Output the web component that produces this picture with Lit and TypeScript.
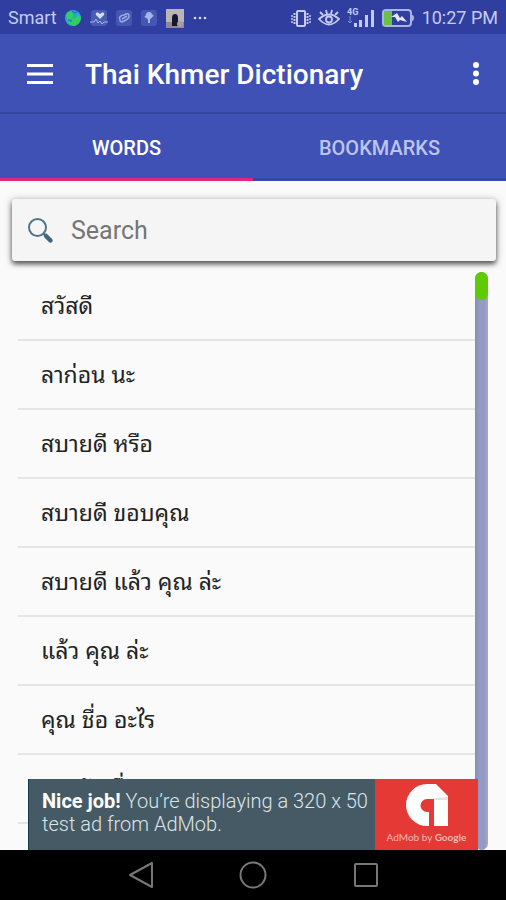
import { LitElement, html, css } from "lit";
import { customElement, property, state } from "lit/decorators.js";
import { classMap } from "lit/directives/class-map.js";

@customElement("status-bar")
class StatusBar extends LitElement {
  static styles = css`
    :host {
      display: flex;
      justify-content: space-between;
      align-items: center;
      height: 34px;
      padding: 2px 8px 0;
      box-sizing: border-box;
      background: #303f9f;
      color: #c5cbee;
      font-size: 18px;
      line-height: 24px;
    }
    .group {
      display: flex;
      align-items: center;
      white-space: nowrap;
    }
    .left {
      gap: 8px;
    }
    .right {
      gap: 7px;
    }
    svg {
      display: block;
    }
  `;
  render() {
    return html`
      <div class="group left">
        <span>Smart</span>
        <svg width="17" height="17" viewBox="0 0 17 17">
          <circle cx="8" cy="8" r="8" fill="#2aa3d8" />
          <path d="M1 5Q3 1 7 1L9 4 7 8 9 9 13 5 16 7Q16 14 9 16L4 14 2 10Z" fill="#2fcf62" />
          <path d="M7 1L9 3 12 2M3 10L7 11" stroke="#1c7fcf" stroke-width="1.5" fill="none" />
        </svg>
        <svg width="18" height="16" viewBox="0 0 18 16">
          <rect x="1" width="16" height="16" rx="3" fill="#4a5bb5" />
          <path d="M10 9L6 5Q5 2 8 2.500L10 4 12 2.500Q15 2 14 5Z" fill="#d6dcf8" />
          <path d="M0 12H4L6 9 8 13 10 11 12 14 14 12H18" stroke="#aab4e4" fill="none" />
        </svg>
        <svg width="17" height="16" viewBox="0 0 17 16">
          <rect width="16" height="16" rx="3" fill="#4557b4" />
          <path d="M4 10Q2 6 8 5 13 2 13 6 13 9 8 11 4 13 4 10ZM6 9L11 6" stroke="#9eabe2" stroke-width="1.500" fill="none" />
        </svg>
        <svg width="17" height="16" viewBox="0 0 17 16">
          <rect width="16" height="16" rx="3" fill="#4557b4" />
          <circle cx="8" cy="5" r="3" fill="#a9b5e8" />
          <path d="M8 6V13M4 6L8 9 12 5" stroke="#a9b5e8" stroke-width="2" fill="none" />
        </svg>
        <svg width="18" height="19" viewBox="0 0 18 19">
          <rect width="18" height="19" fill="#b9b5bb" />
          <rect y="13" width="18" height="6" fill="#8d8995" />
          <path d="M6 17V9Q6 5 9 5 12 5 12 9V17Z" fill="#17172b" />
          <circle cx="14" cy="15" r="3" fill="#a7a1a4" />
        </svg>
        <svg width="16" height="16" viewBox="0 0 16 16" fill="#d6dcf8">
          <circle cx="3" cy="8" r="1.300" />
          <circle cx="8" cy="8" r="1.300" />
          <circle cx="13" cy="8" r="1.300" />
        </svg>
      </div>
      <div class="group right">
        <svg width="20" height="19" viewBox="0 0 20 19" fill="none" stroke="#c5cbee">
          <rect x="6" y="2" width="8" height="15" rx="1" stroke-width="2" />
          <path d="M3.500 4V16M16.500 4V16" stroke-width="2" stroke-dasharray="2 1" />
          <path d="M1 6V14M19 6V14" stroke-width="1.500" stroke-dasharray="2 1" />
        </svg>
        <svg width="22" height="20" viewBox="0 0 22 20" fill="none" stroke="#c5cbee" stroke-width="1.800">
          <path d="M1 11Q11 2 21 11 11 22 1 11Z" />
          <circle cx="11" cy="11.500" r="3" />
          <path d="M2 4L5 7M8 2L9 6M14 2L13 6M20 4L17 7" />
        </svg>
        <svg width="28" height="22" viewBox="0 0 28 22">
          <text x="0" y="8" font-size="9" font-weight="700" fill="#c5cbee">4G</text>
          <path d="M3 9V16M1 14L3 16 5 14" stroke="#7d89cf" fill="none" />
          <path d="M7 16H10V20H7ZM12 13H15V20H12ZM18 8H21V20H18ZM24 3H27V20H24Z" fill="#c5cbee" />
        </svg>
        <svg width="33" height="18" viewBox="0 0 33 18">
          <rect x="1" y="1" width="28" height="16" rx="3" fill="none" stroke="#a9b3e4" stroke-width="2" />
          <rect x="2" y="2" width="8" height="14" fill="#6cc04a" />
          <path d="M30 6Q32 6 32 9 32 12 30 12" fill="#a9b3e4" />
          <path d="M9 8L15 4 18 9 20 7 25 13 18 11 16 13 13 8Z" fill="#e2e6fb" />
        </svg>
        <span>10:27 PM</span>
      </div>
    `;
  }
}

@customElement("ad-banner")
class AdBanner extends LitElement {
  static styles = css`
    :host {
      display: block;
    }
    .ad {
      display: flex;
      height: 71px;
      color: #dde5e8;
      background: #455a64;
      text-decoration: none;
      font-size: 20px;
      line-height: 23px;
    }
    .copy {
      flex: 1;
      margin: 0;
      padding: 11px 0 0 13px;
      border-left: 1px solid #0f3c4a;
      font-weight: 300;
    }
    strong {
      color: #fff;
      font-weight: 700;
    }
    .brand {
      display: flex;
      flex-direction: column;
      align-items: center;
      width: 103px;
      padding-top: 4px;
      box-sizing: border-box;
      background: #e53935;
      color: #f6b5b3;
      font: 10px/17px Lato, sans-serif;
      white-space: nowrap;
    }
    b {
      font-weight: 700;
    }
  `;
  render() {
    return html`
      <a class="ad" href="#admob">
        <p class="copy"><strong>Nice job!</strong> You’re displaying a 320 x 50 test ad from AdMob.</p>
        <span class="brand">
          <svg width="44" height="46" viewBox="0 0 44 46">
            <path d="M22 43A21 21 0 0 1 22 1H31L43 13V43H29V16H22A6.500 6.500 0 0 0 22 29Z" fill="#fff" />
            <path d="M24 43V29H22V43Z" fill="#fff" />
            <path d="M29 15L43 14V17L29 17Z" fill="#e4e4e4" />
          </svg>
          <span>AdMob by <b>Google</b></span>
        </span>
      </a>
    `;
  }
}

@customElement("word-list")
class WordList extends LitElement {
  @property({ attribute: false }) words: string[] = [];
  static styles = css`
    :host {
      display: flex;
      min-height: 0;
      overflow: hidden;
      padding: 0 18px;
    }
    ul {
      flex: 1;
      margin: 0;
      padding: 0;
      list-style: none;
    }
    li {
      display: flex;
      align-items: center;
      height: 69px;
      box-sizing: border-box;
      padding: 0 23px 4px;
      border-bottom: 2px solid #e5e5e5;
      color: #222;
      font-family: "Noto Sans Thai Looped", "Droid Sans Thai", Loma, Garuda, Waree, "Noto Serif Thai", FreeSerif, sans-serif;
      font-size: 23px;
      line-height: 30px;
    }
    .track {
      width: 13px;
      border-radius: 7px;
      background: linear-gradient(90deg, #858db4, #949bc2 30%, #949bc2 75%, #a4a9ce);
    }
    .thumb {
      height: 28px;
      border-radius: 7px;
      background: #5fcb05;
    }
  `;
  render() {
    return html`
      <ul>
        ${this.words.map((w) => html`<li>${w}</li>`)}
      </ul>
      <div class="track"><div class="thumb"></div></div>
    `;
  }
}

@customElement("app-root")
class AppRoot extends LitElement {
  @state() private tab = "words";
  private words = [
    "สวัสดี",
    "ลาก่อน นะ",
    "สบายดี หรือ",
    "สบายดี ขอบคุณ",
    "สบายดี แล้ว คุณ ล่ะ",
    "แล้ว คุณ ล่ะ",
    "คุณ ชื่อ อะไร",
    "ผม ฉัน ชื่อ",
  ];
  static styles = css`
    :host {
      display: flex;
      flex-direction: column;
      height: 100vh;
      overflow: hidden;
      background: #fafafa;
      font-family: Roboto, "Noto Sans", sans-serif;
    }
    button {
      border: 0;
      padding: 0;
      background: none;
      color: inherit;
      font: inherit;
    }
    svg {
      display: block;
    }
    .bar {
      display: flex;
      align-items: center;
      height: 80px;
      box-sizing: border-box;
      padding: 2px 24px 0 26px;
      background: #3f51b5;
      color: #fff;
      border-bottom: 2px solid #35469b;
    }
    h1 {
      flex: 1;
      margin: 0 0 0 31px;
      padding-top: 2px;
      font-size: 28px;
      line-height: 34px;
      font-weight: 500;
    }
    .tabs {
      display: flex;
      height: 67px;
      background: #3f51b5;
    }
    .tabs button {
      flex: 1;
      padding-top: 3px;
      border-bottom: 3px solid #3046b0;
      color: #bcc4ea;
      font-size: 20px;
      line-height: 24px;
      font-weight: 500;
    }
    .tabs .on {
      color: #fff;
      border-color: #e2267d;
    }
    main {
      position: relative;
      display: flex;
      flex-direction: column;
      flex: 1;
      min-height: 0;
    }
    .search {
      display: flex;
      align-items: center;
      gap: 17px;
      height: 62px;
      flex: none;
      box-sizing: border-box;
      margin: 18px 10px 11px 12px;
      padding: 2px 16px 0;
      border-radius: 3px;
      background: #f5f5f5;
      box-shadow: 0 3px 5px rgba(0, 0, 0, 0.6), 0 1px 8px rgba(0, 0, 0, 0.25);
    }
    input {
      flex: 1;
      min-width: 0;
      border: 0;
      padding: 0;
      outline: 0;
      background: none;
      font: 25px/32px Roboto, sans-serif;
      color: #333;
    }
    input::placeholder {
      color: #757575;
      opacity: 1;
    }
    word-list {
      flex: 1;
    }
    ad-banner {
      position: absolute;
      left: 28px;
      right: 28px;
      bottom: 0;
    }
    nav {
      display: flex;
      justify-content: center;
      align-items: center;
      gap: 85px;
      height: 50px;
      background: #000;
    }
  `;
  render() {
    return html`
      <status-bar></status-bar>
      <header class="bar">
        <button aria-label="Menu">
          <svg width="28" height="22" viewBox="0 0 28 22">
            <path d="M1 2.500H27M1 11H27M1 19.500H27" stroke="#fff" stroke-width="3" />
          </svg>
        </button>
        <h1>Thai Khmer Dictionary</h1>
        <button aria-label="More options">
          <svg width="12" height="26" viewBox="0 0 12 26" fill="#fff">
            <circle cx="6" cy="4" r="3" />
            <circle cx="6" cy="12.500" r="3" />
            <circle cx="6" cy="21" r="3" />
          </svg>
        </button>
      </header>
      <div class="tabs" role="tablist">
        ${["words", "bookmarks"].map(
          (t) => html`<button
            role="tab"
            aria-selected=${this.tab === t}
            class=${classMap({ on: this.tab === t })}
            @click=${() => (this.tab = t)}
          >${t.toUpperCase()}</button>`
        )}
      </div>
      <main>
        <label class="search">
          <svg width="26" height="26" viewBox="0 0 26 26" fill="none">
            <circle cx="9.500" cy="9.500" r="8.500" stroke="#4f7588" stroke-width="2" />
            <path d="M15 15L18 18" stroke="#4f7588" stroke-width="2" />
            <path d="M18 18L22.500 22.500" stroke="#44687c" stroke-width="4.500" stroke-linecap="round" />
          </svg>
          <input type="text" placeholder="Search" aria-label="Search" />
        </label>
        <word-list .words=${this.words}></word-list>
        <ad-banner></ad-banner>
      </main>
      <nav>
        <button aria-label="Back">
          <svg width="28" height="28" viewBox="0 0 28 28">
            <path d="M26 2V26L4 14Z" fill="none" stroke="#777" stroke-width="2" stroke-linejoin="round" />
          </svg>
        </button>
        <button aria-label="Home">
          <svg width="28" height="28" viewBox="0 0 28 28">
            <circle cx="14" cy="14" r="12.500" fill="none" stroke="#777" stroke-width="2" />
          </svg>
        </button>
        <button aria-label="Recent apps">
          <svg width="28" height="28" viewBox="0 0 28 28">
            <rect x="3" y="3" width="22" height="22" rx="1" fill="none" stroke="#777" stroke-width="2" />
          </svg>
        </button>
      </nav>
    `;
  }
}
